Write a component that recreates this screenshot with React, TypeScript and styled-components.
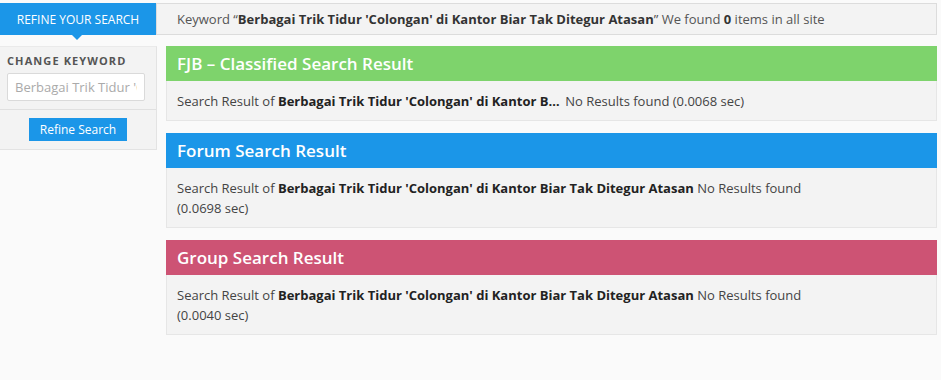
import React from "react";
import styled, { createGlobalStyle } from "styled-components";

const GlobalStyle = createGlobalStyle`
  body {
    margin: 0;
    background: #fafafa;
    font-family: "Open Sans", "DejaVu Sans", sans-serif;
    color: #444;
  }
`;

const keyword = "Berbagai Trik Tidur 'Colongan' di Kantor Biar Tak Ditegur Atasan";

const results = [
  { title: "FJB \u2013 Classified Search Result", color: "#7ed36c", time: "0.0068", short: true },
  { title: "Forum Search Result", color: "#1b96e8", time: "0.0698", short: false },
  { title: "Group Search Result", color: "#cd5374", time: "0.0040", short: false },
];

export default function App() {
  return (
    <>
      <GlobalStyle />
      <Page>
        <TopRow>
          <Tab>Refine your search</Tab>
          <KeywordBar>
            Keyword &ldquo;<b>{keyword}</b>&rdquo; We found <b>0</b> items in all site
          </KeywordBar>
        </TopRow>
        <MainRow>
          <Sidebar>
            <SideSection>
              <Label>Change keyword</Label>
              <Input defaultValue={keyword} />
            </SideSection>
            <SideSection $center>
              <Button>Refine Search</Button>
            </SideSection>
          </Sidebar>
          <Results>
            {results.map((r) => (
              <Card key={r.title}>
                <CardHead $color={r.color}>{r.title}</CardHead>
                <CardBody>
                  Search Result of <Key $short={r.short}>{keyword}</Key> No Results found
                  {r.short ? ` (${r.time} sec)` : <Time>({r.time} sec)</Time>}
                </CardBody>
              </Card>
            ))}
          </Results>
        </MainRow>
      </Page>
    </>
  );
}

const Page = styled.div`
  padding: 3px 4px 0 0;
`;

const TopRow = styled.div`
  display: flex;
  height: 32px;
`;

const Tab = styled.div`
  position: relative;
  width: 156px;
  flex-shrink: 0;
  background: #1b96e8;
  color: #fff;
  font-size: 12px;
  text-transform: uppercase;
  display: flex;
  align-items: center;
  justify-content: center;
  &::after {
    content: "";
    position: absolute;
    left: 72px;
    bottom: -5px;
    border-left: 5px solid transparent;
    border-right: 5px solid transparent;
    border-top: 5px solid #1b96e8;
  }
`;

const KeywordBar = styled.div`
  flex: 1;
  display: flex;
  align-items: center;
  background: #f3f3f3;
  border: 1px solid #dcdcdc;
  padding-left: 20px;
  font-size: 13px;
  color: #555;
  white-space: pre;
  b {
    color: #333;
    font-weight: 700;
  }
`;

const MainRow = styled.div`
  display: flex;
  gap: 9px;
  margin-top: 11px;
  align-items: flex-start;
`;

const Sidebar = styled.div`
  width: 157px;
  flex-shrink: 0;
  background: #f3f3f3;
  border-right: 1px solid #e3e3e3;
  border-top: 1px solid #eaeaea;
  border-bottom: 1px solid #e3e3e3;
  box-sizing: border-box;
`;

const SideSection = styled.div<{ $center?: boolean }>`
  padding: ${(p) => (p.$center ? "8px 0 8px" : "7px 11px 8px 7px")};
  display: flex;
  flex-direction: column;
  align-items: ${(p) => (p.$center ? "center" : "stretch")};
  & + & {
    border-top: 1px solid #e0e0e0;
  }
`;

const Label = styled.div`
  font-size: 11px;
  font-weight: 700;
  letter-spacing: 1.1px;
  text-transform: uppercase;
  color: #555;
  line-height: 14px;
`;

const Input = styled.input`
  margin-top: 5px;
  height: 28px;
  box-sizing: border-box;
  border: 1px solid #dadada;
  border-radius: 2px;
  background: #fff;
  padding: 0 7px;
  font-family: "Open Sans", sans-serif;
  font-size: 13px;
  color: #aaa;
  outline: none;
`;

const Button = styled.button`
  width: 98px;
  height: 23px;
  border: none;
  background: #1b96e8;
  color: #fff;
  font-family: "Open Sans", sans-serif;
  font-size: 12px;
  padding: 0;
`;

const Results = styled.div`
  flex: 1;
  display: flex;
  flex-direction: column;
  gap: 12px;
`;

const Card = styled.div`
  display: flex;
  flex-direction: column;
`;

const CardHead = styled.div<{ $color: string }>`
  height: 35px;
  background: ${(p) => p.$color};
  color: #fff;
  font-size: 17px;
  font-weight: 600;
  display: flex;
  align-items: center;
  padding-left: 11px;
`;

const CardBody = styled.div`
  background: #f3f3f3;
  border: 1px solid #e6e6e6;
  border-top: none;
  padding: 10px 10px 9px;
  font-size: 13px;
  line-height: 20px;
  color: #444;
`;

const Key = styled.b<{ $short?: boolean }>`
  font-weight: 700;
  color: #222;
  ${(p) =>
    p.$short &&
    `
    display: inline-block;
    max-width: 284px;
    overflow: hidden;
    text-overflow: ellipsis;
    white-space: nowrap;
    vertical-align: bottom;
  `}
`;

const Time = styled.span`
  display: block;
`;
